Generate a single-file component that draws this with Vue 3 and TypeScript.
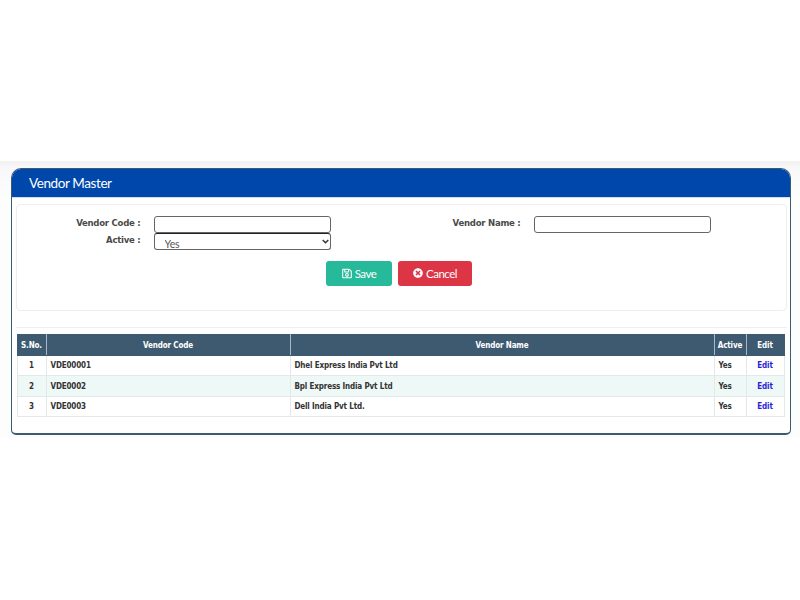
<script setup lang="ts">
interface Vendor { code: string; name: string; active: string }
const vendors: Vendor[] = [
  { code: 'VDE00001', name: 'Dhel Express India Pvt Ltd', active: 'Yes' },
  { code: 'VDE0002', name: 'Bpl Express India Pvt Ltd', active: 'Yes' },
  { code: 'VDE0003', name: 'Dell India Pvt Ltd.', active: 'Yes' },
]
</script>

<template>
  <div class="page">
    <div class="band">
      <section class="card">
        <header class="title">Vendor Master</header>
        <form class="panel" @submit.prevent>
          <div class="fields">
            <label class="lbl">Vendor Code :</label>
            <input class="ctl" type="text" />
            <label class="lbl">Vendor Name :</label>
            <input class="ctl" type="text" />
            <label class="lbl lbl-active">Active :</label>
            <div class="sel-wrap">
              <select class="ctl sel"><option>Yes</option></select>
              <svg class="chev" width="7" height="5" viewBox="0 0 7 5" fill="none" stroke="#333" stroke-width="1.4"><path d="M0.700 1 3.500 3.800 6.300 1"/></svg>
            </div>
          </div>
          <div class="actions">
            <button class="btn save" type="button">
              <svg width="10" height="11" viewBox="0 0 448 512" fill="currentColor"><path d="M433.900 129.900l-83.900-83.900A48 48 0 0 0 316.100 32H48C21.500 32 0 53.500 0 80v352c0 26.500 21.500 48 48 48h352c26.500 0 48-21.500 48-48V163.900a48 48 0 0 0-14.100-34zM272 80v80H144V80h128zm122 352H54a6 6 0 0 1-6-6V86a6 6 0 0 1 6-6h42v104c0 13.300 10.700 24 24 24h176c13.300 0 24-10.700 24-24V83.900l78.200 78.200a6 6 0 0 1 1.800 4.200V426a6 6 0 0 1-6 6zM224 232c-48.500 0-88 39.500-88 88s39.500 88 88 88 88-39.500 88-88-39.500-88-88-88zm0 128c-22.100 0-40-17.900-40-40s17.900-40 40-40 40 17.900 40 40-17.900 40-40 40z"/></svg>
              Save
            </button>
            <button class="btn cancel" type="button">
              <svg width="10" height="10" viewBox="0 0 512 512" fill="currentColor"><path d="M256 8C119 8 8 119 8 256s111 248 248 248 248-111 248-248S393 8 256 8zm121.600 313.100c4.700 4.700 4.700 12.300 0 17L338 377.600c-4.700 4.700-12.300 4.700-17 0L256 312l-65.100 65.600c-4.700 4.700-12.300 4.700-17 0L134.400 338c-4.700-4.700-4.700-12.300 0-17l65.600-65-65.600-65.100c-4.700-4.700-4.700-12.300 0-17l39.600-39.600c4.700-4.700 12.300-4.700 17 0l65 65.700 65.100-65.600c4.700-4.700 12.300-4.700 17 0l39.600 39.600c4.700 4.700 4.700 12.300 0 17L312 256l65.600 65.100z"/></svg>
              Cancel
            </button>
          </div>
        </form>
        <div class="rule"></div>
        <table class="grid">
          <colgroup>
            <col class="c1" /><col class="c2" /><col /><col class="c4" /><col class="c5" />
          </colgroup>
          <thead>
            <tr><th>S.No.</th><th>Vendor Code</th><th>Vendor Name</th><th>Active</th><th>Edit</th></tr>
          </thead>
          <tbody>
            <tr v-for="(v, i) in vendors" :key="v.code">
              <td class="center">{{ i + 1 }}</td>
              <td>{{ v.code }}</td>
              <td>{{ v.name }}</td>
              <td>{{ v.active }}</td>
              <td class="center"><a class="edit" href="#" @click.prevent>Edit</a></td>
            </tr>
          </tbody>
        </table>
      </section>
    </div>
  </div>
</template>

<style>
html, body { margin: 0; background: #fff; }
</style>

<style scoped>
.page {
  width: 800px;
  height: 600px;
  padding-top: 161px;
  box-sizing: border-box;
  overflow: hidden;
}
.band {
  background: linear-gradient(#f1f1f1 0, #f8f8f8 7px, #fcfdfd 40px);
  padding: 7px 9px 0 11px;
  height: 276px;
  box-sizing: border-box;
}
.card {
  height: 267px;
  box-sizing: border-box;
  background: #fff;
  border: 1.5px solid #3c5a70;
  border-bottom-width: 2px;
  border-radius: 10px 10px 5px 5px;
  overflow: hidden;
  display: flow-root;
  padding: 0 3.500px;
}
.title {
  margin: 0 -3.500px;
  height: 28px;
  background: #0047ab;
  color: #fff;
  font: 13.500px/28px Lato, sans-serif;
  letter-spacing: -0.4px;
  padding-left: 17px;
  border-bottom: 1px solid #cfe0f2;
}
.panel {
  margin-top: 6px;
  height: 107px;
  box-sizing: border-box;
  border: 1px solid #eeeeee;
  border-radius: 4px;
  padding-top: 11px;
}
.fields {
  display: grid;
  grid-template-columns: 124px 177px 177px 177px;
  column-gap: 13px;
  grid-auto-rows: 17px;
  row-gap: 0;
  align-items: center;
}
.lbl {
  text-align: right;
  font: bold 9.500px/13px "DejaVu Sans", sans-serif;
  font-stretch: condensed;
  letter-spacing: -0.25px;
  color: #4a4a4a;
  align-self: start;
}
.lbl-active { grid-column: 1; }
.ctl {
  box-sizing: border-box;
  width: 177px;
  height: 17px;
  margin: 0;
  border: 1px solid #666;
  border-radius: 3px;
  background: #fff;
  padding: 0;
}
.sel-wrap {
  position: relative;
  width: 177px;
  height: 17px;
}
.sel {
  display: block;
  appearance: none;
  border-top-color: #222;
  font: 10.500px Lato, sans-serif;
  letter-spacing: -0.2px;
  color: #555;
  padding: 4px 0 0 10px;
}
.chev {
  position: absolute;
  right: 2px;
  top: 6px;
  pointer-events: none;
}
.actions {
  display: flex;
  justify-content: center;
  gap: 6px;
  margin-top: 10.500px;
  padding-right: 4px;
}
.btn {
  display: inline-flex;
  align-items: center;
  justify-content: center;
  gap: 3px;
  height: 25px;
  border: 0;
  border-radius: 3px;
  color: #fff;
  font: 11.500px Lato, sans-serif;
  letter-spacing: -0.5px;
  padding: 0;
}
.save { width: 66px; background: #26b99a; }
.cancel { width: 74px; background: #dc3545; }
.rule {
  margin: 16px 0 6px;
  border-top: 1px solid #eeeeee;
}
.grid {
  width: 768px;
  margin-left: 1px;
  border-collapse: collapse;
  table-layout: fixed;
  font: bold 8px "DejaVu Sans", sans-serif;
  font-stretch: condensed;
  letter-spacing: -0.15px;
}
.c1 { width: 29px; }
.c2 { width: 244px; }
.c4 { width: 32px; }
.c5 { width: 38px; }
th {
  height: 20px;
  padding: 0;
  background: #3d5a70;
  color: #fff;
  border: 1px solid #3d5a70;
  border-right-color: #a9b8c4;
  font-weight: bold;
  text-align: center;
}
th:last-child { border-right-color: #3d5a70; }
td {
  height: 20.400px;
  padding: 0 4px;
  color: #333;
  border: 1px solid #e3e8e8;
  white-space: nowrap;
  box-sizing: border-box;
}
tbody tr:nth-child(even) td { background: #eef8f6; }
.center { text-align: center; padding: 0; }
.edit { color: #2a1fd6; text-decoration: none; }
</style>
